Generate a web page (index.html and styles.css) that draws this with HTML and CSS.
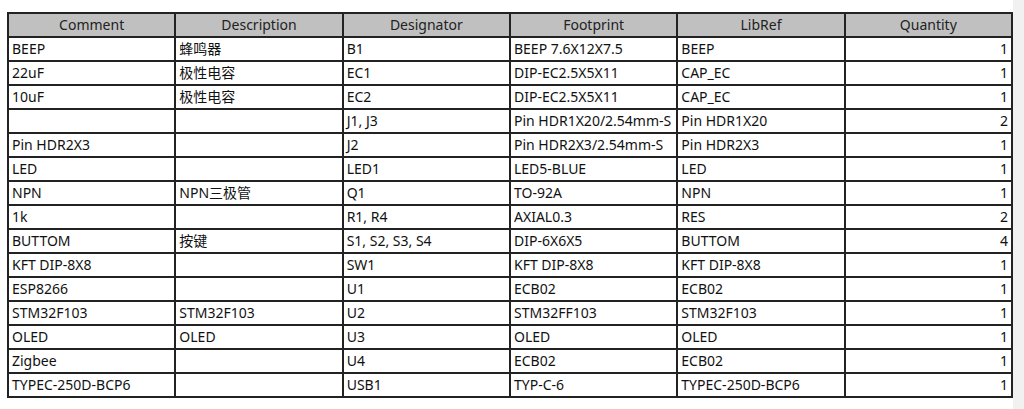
FILE: index.html
```html
<!DOCTYPE html>
<html lang="zh">
<head>
<meta charset="utf-8">
<title>BOM</title>
<link rel="stylesheet" href="styles.css">
</head>
<body>
<div class="page">
  <main class="content">
    <table class="bom">
      <thead>
        <tr>
          <th>Comment</th><th>Description</th><th>Designator</th><th>Footprint</th><th>LibRef</th><th>Quantity</th>
        </tr>
      </thead>
      <tbody>
        <tr><td>BEEP</td><td>蜂鸣器</td><td>B1</td><td>BEEP 7.6X12X7.5</td><td>BEEP</td><td class="num">1</td></tr>
        <tr><td>22uF</td><td>极性电容</td><td>EC1</td><td>DIP-EC2.5X5X11</td><td>CAP_EC</td><td class="num">1</td></tr>
        <tr><td>10uF</td><td>极性电容</td><td>EC2</td><td>DIP-EC2.5X5X11</td><td>CAP_EC</td><td class="num">1</td></tr>
        <tr><td></td><td></td><td>J1, J3</td><td>Pin HDR1X20/2.54mm-S</td><td>Pin HDR1X20</td><td class="num">2</td></tr>
        <tr><td>Pin HDR2X3</td><td></td><td>J2</td><td>Pin HDR2X3/2.54mm-S</td><td>Pin HDR2X3</td><td class="num">1</td></tr>
        <tr><td>LED</td><td></td><td>LED1</td><td>LED5-BLUE</td><td>LED</td><td class="num">1</td></tr>
        <tr><td>NPN</td><td>NPN三极管</td><td>Q1</td><td>TO-92A</td><td>NPN</td><td class="num">1</td></tr>
        <tr><td>1k</td><td></td><td>R1, R4</td><td>AXIAL0.3</td><td>RES</td><td class="num">2</td></tr>
        <tr><td>BUTTOM</td><td>按键</td><td>S1, S2, S3, S4</td><td>DIP-6X6X5</td><td>BUTTOM</td><td class="num">4</td></tr>
        <tr><td>KFT DIP-8X8</td><td></td><td>SW1</td><td>KFT DIP-8X8</td><td>KFT DIP-8X8</td><td class="num">1</td></tr>
        <tr><td>ESP8266</td><td></td><td>U1</td><td>ECB02</td><td>ECB02</td><td class="num">1</td></tr>
        <tr><td>STM32F103</td><td>STM32F103</td><td>U2</td><td>STM32FF103</td><td>STM32F103</td><td class="num">1</td></tr>
        <tr><td>OLED</td><td>OLED</td><td>U3</td><td>OLED</td><td>OLED</td><td class="num">1</td></tr>
        <tr><td>Zigbee</td><td></td><td>U4</td><td>ECB02</td><td>ECB02</td><td class="num">1</td></tr>
        <tr><td>TYPEC-250D-BCP6</td><td></td><td>USB1</td><td>TYP-C-6</td><td>TYPEC-250D-BCP6</td><td class="num">1</td></tr>
      </tbody>
    </table>
  </main>
  <div class="scrollbar"></div>
</div>
</body>
</html>
```

FILE: styles.css
```css
html, body {
  margin: 0;
  padding: 0;
  background: #ffffff;
  height: 100%;
  overflow: hidden;
}

.page {
  display: flex;
  height: 409px;
}

.content {
  flex: 1;
  padding: 12px 0 0 7px;
}

.scrollbar {
  width: 11px;
  background: #f1f1f1;
}

.bom {
  width: 1006px;
  table-layout: fixed;
  border-collapse: collapse;
  font-family: "Noto Sans", "Noto Sans CJK SC", sans-serif;
  font-size: 14px;
  color: #111111;
}

.bom th, .bom td {
  border: 2px solid #222222;
  height: 22px;
  padding: 0 3px;
  white-space: nowrap;
  overflow: hidden;
  line-height: 20px;
}

.bom th {
  background: #c0c0c0;
  font-weight: normal;
  text-align: center;
  color: #222222;
}

.bom td {
  text-align: left;
}

.bom td.num {
  text-align: right;
}
```
